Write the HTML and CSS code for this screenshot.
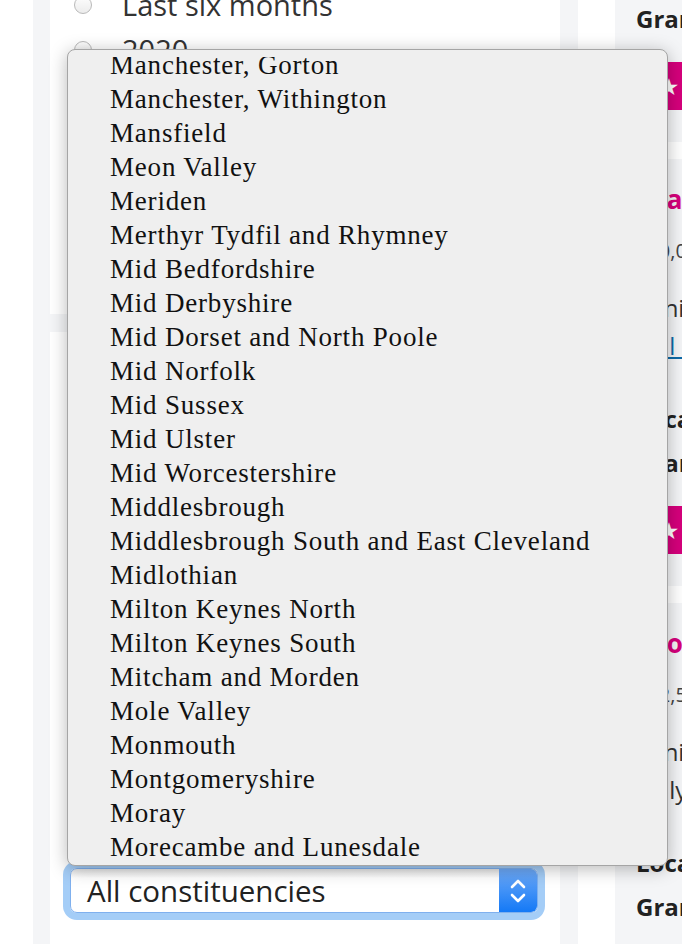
FILE: index.html
```html
<!DOCTYPE html>
<html lang="en">
<head>
<meta charset="utf-8">
<title>Grants by constituency</title>
<link rel="stylesheet" href="styles.css">
</head>
<body>
<div class="page">
  <div class="left-col">
    <section class="card card-dates">
      <ul class="radios">
        <li><span class="radio"></span>Last six months</li>
        <li><span class="radio"></span>2020</li>
        <li><span class="radio"></span>2019</li>
        <li><span class="radio"></span>2018</li>
        <li><span class="radio"></span>2017</li>
        <li><span class="radio"></span>2016</li>
        <li><span class="radio"></span>2015</li>
      </ul>
    </section>
    <section class="card card-area">
      <h3 class="area-title">Filter by area</h3>
      <div class="field">
        <div class="field-label">Region</div>
        <div class="select"><span class="select-text">All regions</span><span class="select-btn"></span></div>
      </div>
      <div class="field">
        <div class="field-label">Local authority</div>
        <div class="select"><span class="select-text">All local authorities</span><span class="select-btn"></span></div>
      </div>
      <div class="field">
        <div class="field-label">Constituency</div>
        <div class="select is-focused">
          <span class="select-text">All constituencies</span>
          <span class="select-btn">
            <svg width="20" height="32" viewBox="0 0 20 32"><path d="M4 12 L10 6 L16 12" fill="none" stroke="#fff" stroke-width="2.6" stroke-linecap="round" stroke-linejoin="round"/><path d="M4 20 L10 26 L16 20" fill="none" stroke="#fff" stroke-width="2.6" stroke-linecap="round" stroke-linejoin="round"/></svg>
          </span>
        </div>
      </div>
    </section>
  </div>

  <div class="right-col">
    <article class="grant">
      <h2 class="grant-title">Grassroots Fund</h2>
      <div class="grant-amount">£10,000</div>
      <p class="grant-desc">Ministry of Housing</p>
      <a class="grant-link" href="#">Full details</a>
      <div class="grant-meta">Local authority</div>
      <div class="grant-meta">Grant programme</div>
      <div class="grant-btn"><span class="star">★</span> Save this grant</div>
    </article>
    <article class="grant">
      <h2 class="grant-title">Grassroots Fund</h2>
      <div class="grant-amount">£10,000</div>
      <p class="grant-desc">Ministry of Housing</p>
      <a class="grant-link" href="#">Full details</a>
      <div class="grant-meta">Local authority</div>
      <div class="grant-meta">Grant programme</div>
      <div class="grant-btn"><span class="star">★</span> Save this grant</div>
    </article>
    <article class="grant">
      <h2 class="grant-title">Grove Community Trust</h2>
      <div class="grant-amount">£12,500</div>
      <p class="grant-desc">Ministry of Housing</p>
      <p class="grant-desc plain">Fully funded</p>
      <div class="grant-meta">Local authority</div>
      <div class="grant-meta">Grant programme</div>
      <div class="grant-btn"><span class="star">★</span> Save this grant</div>
    </article>
  </div>
</div>

<div class="dropdown">
  <div class="dropdown-scroll">
    <ul class="options">
      <li>Manchester, Gorton</li>
      <li>Manchester, Withington</li>
      <li>Mansfield</li>
      <li>Meon Valley</li>
      <li>Meriden</li>
      <li>Merthyr Tydfil and Rhymney</li>
      <li>Mid Bedfordshire</li>
      <li>Mid Derbyshire</li>
      <li>Mid Dorset and North Poole</li>
      <li>Mid Norfolk</li>
      <li>Mid Sussex</li>
      <li>Mid Ulster</li>
      <li>Mid Worcestershire</li>
      <li>Middlesbrough</li>
      <li>Middlesbrough South and East Cleveland</li>
      <li>Midlothian</li>
      <li>Milton Keynes North</li>
      <li>Milton Keynes South</li>
      <li>Mitcham and Morden</li>
      <li>Mole Valley</li>
      <li>Monmouth</li>
      <li>Montgomeryshire</li>
      <li>Moray</li>
      <li>Morecambe and Lunesdale</li>
    </ul>
  </div>
</div>
</body>
</html>
```

FILE: styles.css
```css
html, body {
  margin: 0;
  padding: 0;
  width: 682px;
  height: 944px;
  overflow: hidden;
  background: #fff;
}

body {
  font-family: "Open Sans", "Liberation Sans", sans-serif;
  color: #333;
  position: relative;
}

.page {
  display: grid;
  grid-template-columns: 545px 320px;
  column-gap: 37px;
  padding-left: 33px;
  align-items: start;
}

/* ---------- left column ---------- */
.left-col {
  background: #f4f5f7;
  padding: 0 18px 0 17px;
  display: flex;
  flex-direction: column;
  gap: 18px;
  min-height: 1000px;
}

.card {
  background: #fff;
}

.card-dates {
  height: 314px;
  overflow: hidden;
}

.radios {
  list-style: none;
  margin: -18px 0 0;
  padding: 0 0 0 24px;
}

.radios li {
  display: flex;
  align-items: center;
  height: 45px;
  font-size: 29px;
  color: #333;
}

.radio {
  width: 16px;
  height: 16px;
  border-radius: 50%;
  border: 1px solid #b9b9b9;
  background: linear-gradient(#fdfdfd, #ececec);
  margin-right: 30px;
  flex: none;
}

.card-area {
  padding: 28px 14px 60px 20px;
  min-height: 620px;
}

.area-title {
  margin: 0 0 96px;
  font-size: 24px;
  line-height: 40px;
}

.field {
  margin-top: 66px;
}

.field:first-of-type {
  margin-top: 0;
}

.field-label {
  font-size: 22px;
  line-height: 40px;
  margin-bottom: 10px;
  font-weight: 700;
}

.select {
  position: relative;
  box-sizing: border-box;
  width: 468px;
  height: 45px;
  border: 1px solid #b5b5b5;
  border-radius: 7px;
  background: linear-gradient(#e6e6e6 0, #fff 9px, #fff 100%);
  display: flex;
  align-items: center;
}

.select.is-focused {
  box-shadow: 0 0 0 7px #a4cdf7;
  border-color: #7fb0ee;
}

.select-text {
  flex: 1;
  padding-left: 16px;
  font-size: 29.5px;
  color: #222;
  white-space: nowrap;
}

.select-btn {
  width: 38px;
  align-self: stretch;
  border-radius: 0 6px 6px 0;
  background: linear-gradient(#6eaaf8, #1479f6);
  display: flex;
  align-items: center;
  justify-content: center;
}

/* ---------- right column ---------- */
.right-col {
  margin-top: -285px;
  display: flex;
  flex-direction: column;
  gap: 17px;
}

.grant {
  background: #f4f5f7;
  padding: 24px 21px 30px;
  height: 427px;
  box-sizing: border-box;
}

.grant-title {
  margin: 0;
  font-size: 26px;
  line-height: 32px;
  font-weight: 700;
  color: #d6007c;
  white-space: nowrap;
}

.grant-amount {
  margin-top: 22px;
  font-size: 20px;
  line-height: 28px;
  color: #444;
}

.grant-desc {
  margin: 24px 0 0;
  font-size: 24px;
  line-height: 38px;
  color: #333;
  white-space: nowrap;
}

.grant-desc.plain {
  margin-top: 0;
}

.grant-link {
  display: block;
  font-size: 24px;
  line-height: 38px;
  color: #0d6aa8;
  text-decoration: underline;
}

.grant-meta {
  font-size: 24px;
  line-height: 44px;
  font-weight: 700;
  color: #222;
  white-space: nowrap;
}

.grant-link + .grant-meta,
.plain + .grant-meta {
  margin-top: 32px;
}

.grant-btn {
  margin-top: 21px;
  height: 48px;
  background: #d6007c;
  color: #fff;
  font-size: 22px;
  font-weight: 700;
  display: flex;
  align-items: center;
  padding-left: 24px;
  white-space: nowrap;
}

.star {
  font-size: 20px;
  margin-right: 8px;
}

/* ---------- open native menu overlay ---------- */
.dropdown {
  position: absolute;
  left: 67px;
  top: 49px;
  width: 601px;
  height: 817px;
  box-sizing: border-box;
  background: #efefef;
  border: 1px solid #a5a5a5;
  border-radius: 8px;
  box-shadow: 0 3px 18px rgba(0, 0, 0, 0.28);
  overflow: hidden;
}

.dropdown-scroll {
  margin-top: 7px;
  height: 802px;
  overflow: hidden;
}

.options {
  list-style: none;
  margin: -9px 0 0;
  padding: 0 0 0 42px;
}

.options li {
  font-family: "Liberation Serif", "Times New Roman", serif;
  font-size: 27px;
  letter-spacing: 0.8px;
  line-height: 34px;
  height: 34px;
  color: #111;
  white-space: nowrap;
}
```
